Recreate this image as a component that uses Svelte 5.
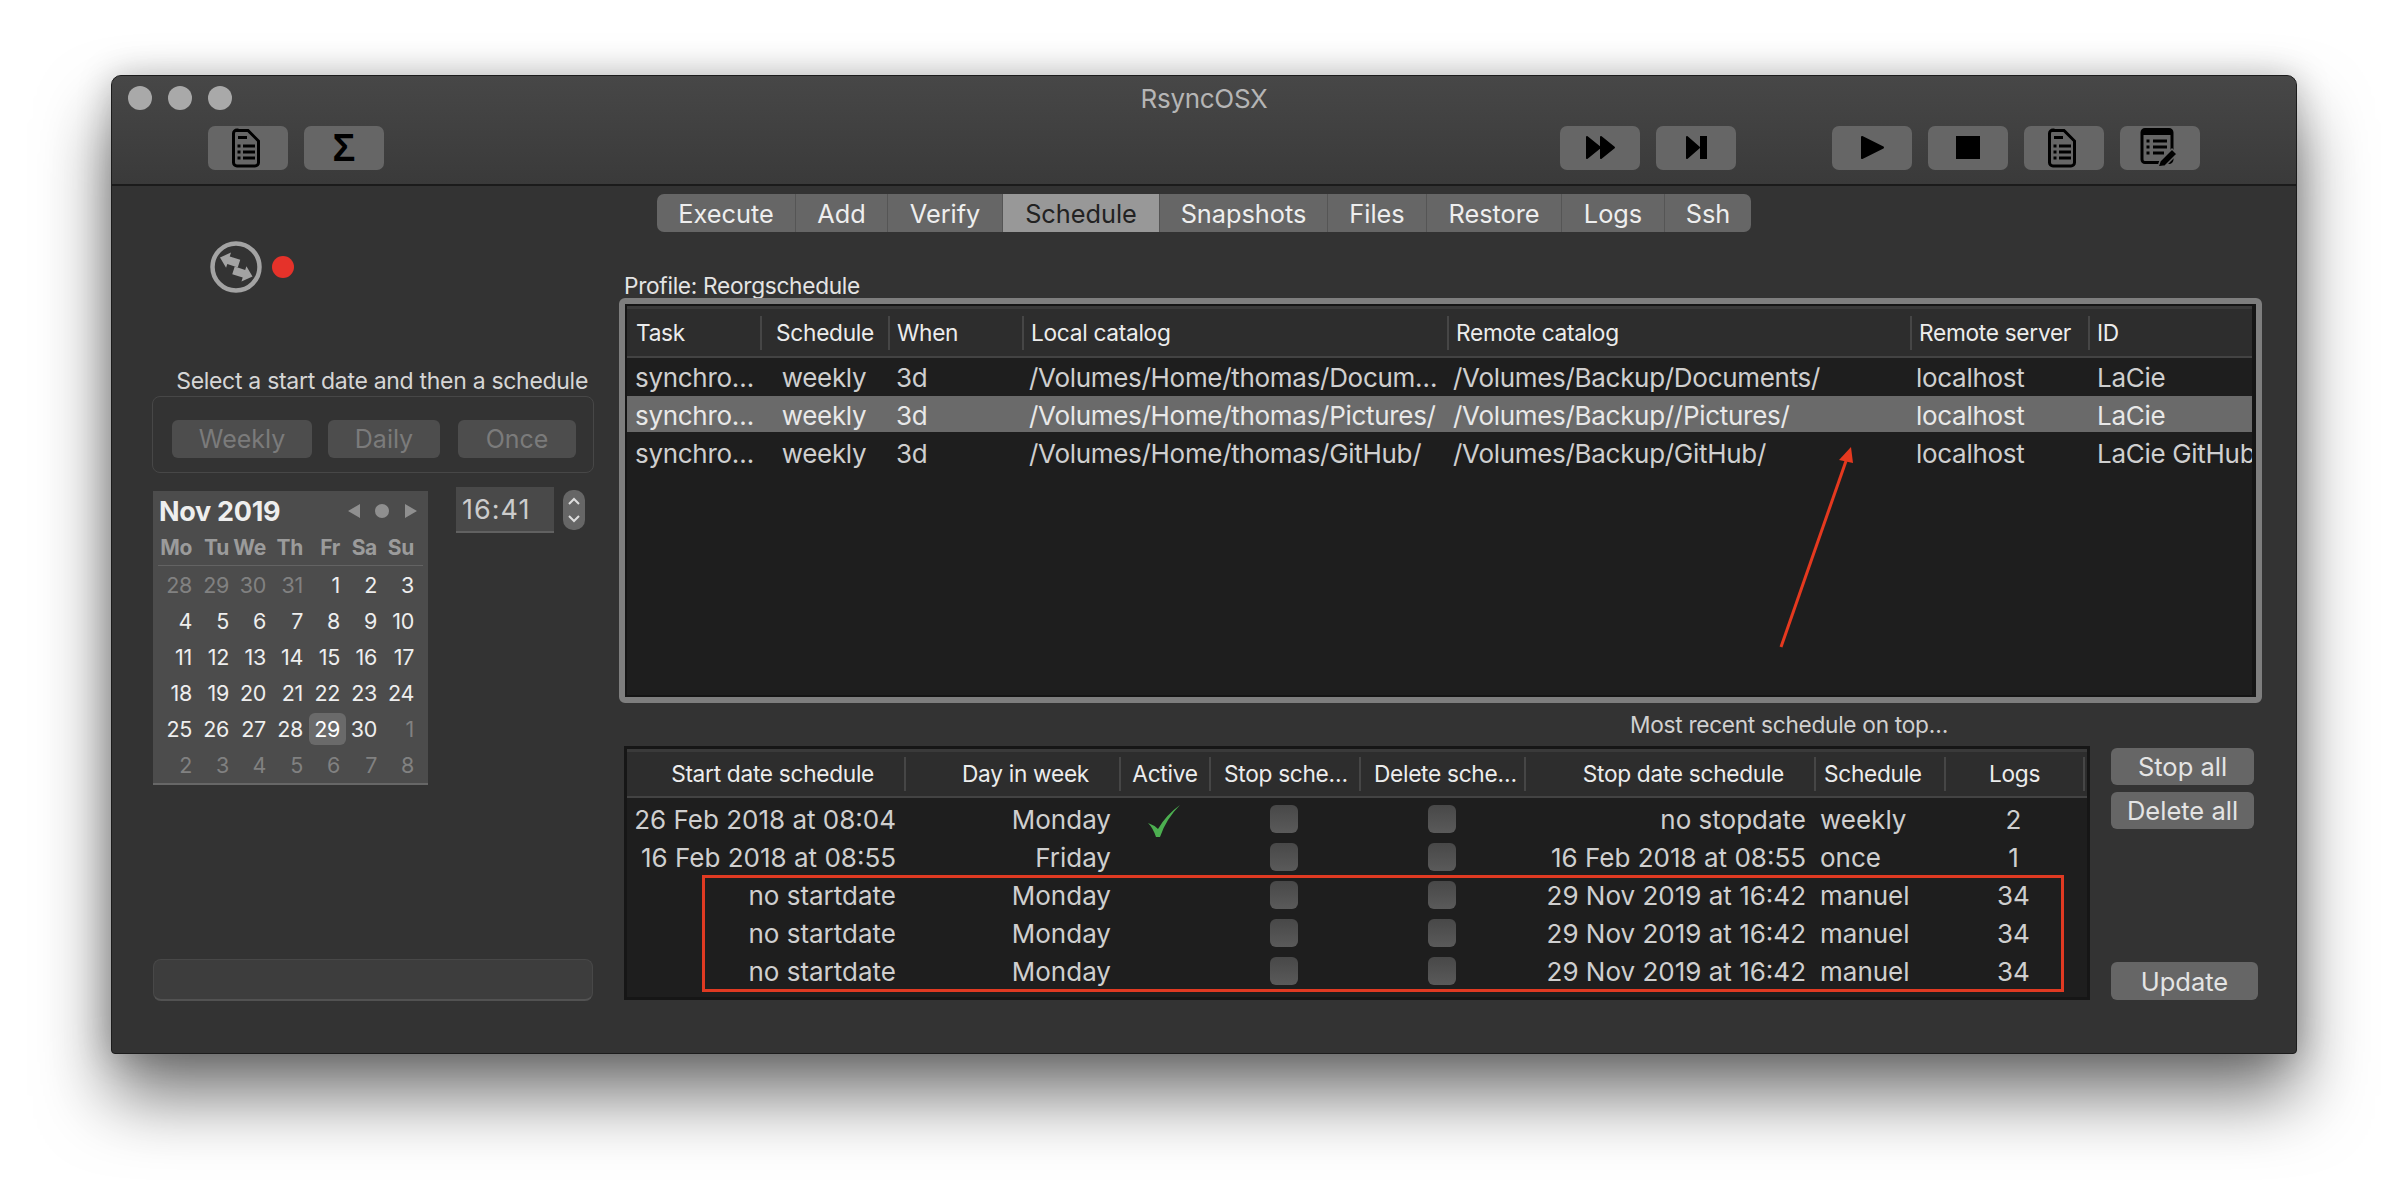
<script lang="ts">
  const tabs = [
    { label: 'Execute', w: 139 },
    { label: 'Add', w: 92 },
    { label: 'Verify', w: 115 },
    { label: 'Schedule', w: 157, active: true },
    { label: 'Snapshots', w: 168 },
    { label: 'Files', w: 99 },
    { label: 'Restore', w: 135 },
    { label: 'Logs', w: 103 },
    { label: 'Ssh', w: 86 },
  ]

  const weekdays = ['Mo', 'Tu', 'We', 'Th', 'Fr', 'Sa', 'Su']
  const days = [
    ...[28, 29, 30, 31].map((n) => ({ n, dim: true })),
    ...Array.from({ length: 30 }, (_, i) => ({ n: i + 1, dim: false })),
    ...[1, 2, 3, 4, 5, 6, 7, 8].map((n) => ({ n, dim: true })),
  ]

  const tasks = [
    { local: '/Volumes/Home/thomas/Docum…', remote: '/Volumes/Backup/Documents/', id: 'LaCie' },
    { local: '/Volumes/Home/thomas/Pictures/', remote: '/Volumes/Backup//Pictures/', id: 'LaCie', selected: true },
    { local: '/Volumes/Home/thomas/GitHub/', remote: '/Volumes/Backup/GitHub/', id: 'LaCie GitHub' },
  ]

  const schedules = [
    { start: '26 Feb 2018 at 08:04', day: 'Monday', active: true, stop: 'no stopdate', kind: 'weekly', logs: 2 },
    { start: '16 Feb 2018 at 08:55', day: 'Friday', active: false, stop: '16 Feb 2018 at 08:55', kind: 'once', logs: 1 },
    { start: 'no startdate', day: 'Monday', active: false, stop: '29 Nov 2019 at 16:42', kind: 'manuel', logs: 34 },
    { start: 'no startdate', day: 'Monday', active: false, stop: '29 Nov 2019 at 16:42', kind: 'manuel', logs: 34 },
    { start: 'no startdate', day: 'Monday', active: false, stop: '29 Nov 2019 at 16:42', kind: 'manuel', logs: 34 },
  ]
</script>

{#snippet docIcon()}
  <svg viewBox="0 0 80 44" class="icon">
    <path d="M29 4.500h11l10.500 10.500v21.500a3.500 3.500 0 0 1-3.500 3.500h-18a3.500 3.500 0 0 1-3.500-3.500v-29a3.500 3.500 0 0 1 3.500-3.500z" fill="none" stroke="#000" stroke-width="3" />
    <path d="M30 11.500h9M35 20h12M35 26h12M35 32h12" stroke="#000" stroke-width="3" fill="none" />
    <path d="M29.500 18.500h3v3h-3zM29.500 24.500h3v3h-3zM29.500 30.500h3v3h-3z" fill="#000" />
  </svg>
{/snippet}

<div class="window">
  <header class="titlebar">
    <div class="title-row">
      <div class="lights"><span></span><span></span><span></span></div>
      <div class="title">RsyncOSX</div>
      <div></div>
    </div>
    <div class="toolbar">
      <button class="tool">{@render docIcon()}</button>
      <button class="tool sigma">Σ</button>
      <div class="tool-group push">
        <button class="tool">
          <svg viewBox="0 0 80 44" class="icon"><path d="M27 11l13 10.500-13 10.500zM41 11l13 10.500-13 10.500z" fill="#000" stroke="#000" stroke-width="2" stroke-linejoin="round" /></svg>
        </button>
        <button class="tool">
          <svg viewBox="0 0 80 44" class="icon"><path d="M31 11l12 10.500-12 10.500z" fill="#000" stroke="#000" stroke-width="2" stroke-linejoin="round" /><rect x="44" y="10" width="7" height="23" fill="#000" /></svg>
        </button>
      </div>
      <div class="tool-group">
        <button class="tool">
          <svg viewBox="0 0 80 44" class="icon"><path d="M30 11l21 10.500-21 10.500z" fill="#000" stroke="#000" stroke-width="2" stroke-linejoin="round" /></svg>
        </button>
        <button class="tool">
          <svg viewBox="0 0 80 44" class="icon"><rect x="28" y="10" width="24" height="23" fill="#000" /></svg>
        </button>
        <button class="tool">{@render docIcon()}</button>
        <button class="tool">
          <svg viewBox="0 0 80 44" class="icon">
            <path d="M25 3.500h24a3 3 0 0 1 3 3v27a3 3 0 0 1-3 3h-24a3 3 0 0 1-3-3v-27a3 3 0 0 1 3-3z" fill="none" stroke="#000" stroke-width="3" />
            <rect x="22" y="3" width="30" height="6" fill="#000" />
            <path d="M33 15h14M33 21h14M33 27h11" stroke="#000" stroke-width="3" />
            <path d="M26.500 13.500h3v3h-3zM26.500 19.500h3v3h-3zM26.500 25.500h3v3h-3z" fill="#000" />
            <path d="M38 41l2-6 12-12 5 5-12 12z" fill="#000" stroke="#666" stroke-width="1.500" />
          </svg>
        </button>
      </div>
    </div>
  </header>

  <nav class="tabs">
    {#each tabs as tab}
      <button class="tab" class:active={tab.active} style:width="{tab.w}px">{tab.label}</button>
    {/each}
  </nav>

  <main class="columns">
    <aside class="left">
      <div class="status">
        <svg viewBox="0 0 52 52" class="sync">
          <circle cx="26" cy="26" r="23.500" fill="none" stroke="#a3a3a3" stroke-width="4.500" />
          <path transform="translate(19.500 19.500) rotate(18)" d="M-10 0l9-8v4h11v8h-11v4z" fill="#a3a3a3" />
          <path transform="translate(33 32.500) rotate(18)" d="M10 0l-9-8v4h-11v8h11v4z" fill="#a3a3a3" />
        </svg>
        <span class="dot"></span>
      </div>

      <div class="hint">Select a start date and then a schedule</div>
      <div class="schedule-box">
        <button class="disabled weekly">Weekly</button>
        <button class="disabled daily">Daily</button>
        <button class="disabled once">Once</button>
      </div>

      <div class="date-row">
        <div class="calendar">
          <div class="cal-head">
            <strong>Nov 2019</strong>
            <svg viewBox="0 0 78 20" class="cal-nav">
              <path d="M20 3v14L8 10zM65 3v14l12-7z" fill="#8f8f8f" />
              <circle cx="42" cy="10" r="7" fill="#8f8f8f" />
            </svg>
          </div>
          <div class="cal-grid weekdays">
            {#each weekdays as d}<span>{d}</span>{/each}
          </div>
          <div class="cal-rule"></div>
          <div class="cal-grid">
            {#each days as d}
              <span class:dim={d.dim}>
                {#if d.n === 29 && !d.dim}<b class="today">{d.n}</b>{:else}{d.n}{/if}
              </span>
            {/each}
          </div>
        </div>
        <div class="time">16:41</div>
        <div class="stepper">
          <svg viewBox="0 0 22 40">
            <path d="M6 14l5-5 5 5M6 26l5 5 5-5" fill="none" stroke="#ddd" stroke-width="2" />
          </svg>
        </div>
      </div>

      <div class="status-field"></div>
    </aside>

    <section class="right">
      <div class="profile">Profile: Reorgschedule</div>

      <div class="ring">
        <div class="table tasks">
          <div class="head task-cols">
            <span class="h-task">Task</span>
            <span class="h-center">Schedule</span>
            <span>When</span>
            <span>Local catalog</span>
            <span>Remote catalog</span>
            <span class="h-server">Remote server</span>
            <span>ID</span>
          </div>
          {#each tasks as t}
            <div class="row task-cols" class:selected={t.selected}>
              <span>synchro…</span>
              <span class="center">weekly</span>
              <span>3d</span>
              <span class="local">{t.local}</span>
              <span class="tight">{t.remote}</span>
              <span class="tight">localhost</span>
              <span class="wide">{t.id}</span>
            </div>
          {/each}
        </div>
        <svg class="arrow" viewBox="0 0 1631 393">
          <path d="M1156 343L1221 157" stroke="#e5391f" stroke-width="3" />
          <path d="M1226 143l-12 13 14 3z" fill="#e5391f" />
        </svg>
      </div>

      <div class="recent">Most recent schedule on top…</div>

      <div class="lower">
        <div class="table schedules">
          <div class="head sched-cols">
            <span class="h-right">Start date schedule</span>
            <span class="h-right">Day in week</span>
            <span class="h-center">Active</span>
            <span class="h-stop">Stop sche…</span>
            <span class="h-stop">Delete sche…</span>
            <span class="h-right">Stop date schedule</span>
            <span class="h-kind">Schedule</span>
            <span class="h-center">Logs</span>
            <span></span>
          </div>
          <div class="sched-rows">
            {#each schedules as s}
              <div class="row sched-cols">
                <span class="right-align">{s.start}</span>
                <span class="right-align">{s.day}</span>
                <span class="center">
                  {#if s.active}
                    <svg viewBox="0 0 36 34" class="check"><path d="M2 19q5 5 8 14h4Q20 15 34 1 20 11 12 25 8 21 2 19z" fill="#4caf50" /></svg>
                  {/if}
                </span>
                <span class="center"><i class="checkbox"></i></span>
                <span class="center"><i class="checkbox"></i></span>
                <span class="right-align">{s.stop}</span>
                <span class="tight">{s.kind}</span>
                <span class="center">{s.logs}</span>
                <span></span>
              </div>
            {/each}
          </div>
          <div class="highlight"></div>
        </div>

        <div class="actions">
          <button class="action">Stop all</button>
          <button class="action">Delete all</button>
          <button class="action update">Update</button>
        </div>
      </div>
    </section>
  </main>
</div>

<style>
  :global(body) {
    background: #fff;
    font-family: Inter, 'Liberation Sans', sans-serif;
    min-height: 100vh;
  }

  button {
    font: inherit;
    border: 0;
    padding: 0;
  }

  .window {
    box-sizing: border-box;
    width: 2186px;
    height: 979px;
    margin: 75px 0 0 111px;
    display: flex;
    flex-direction: column;
    background: #333;
    border: 1px solid #1c1c1c;
    border-radius: 10px 10px 4px 4px;
    box-shadow:
      0 42px 70px rgba(0, 0, 0, 0.55),
      0 0 34px rgba(0, 0, 0, 0.22);
    letter-spacing: -0.3px;
  }

  .titlebar {
    box-sizing: border-box;
    height: 110px;
    background: linear-gradient(#474747, #3a3a3a);
    border-bottom: 2px solid #1b1b1b;
    border-radius: 9px 9px 0 0;
  }

  .title-row {
    height: 44px;
    padding: 0 16px;
    display: grid;
    grid-template-columns: 1fr auto 1fr;
    align-items: center;
  }

  .lights {
    display: flex;
    gap: 16px;
  }

  .lights span {
    width: 24px;
    height: 24px;
    border-radius: 50%;
    background: #a9a9a9;
  }

  .title {
    color: #b5b5b5;
    font-size: 26px;
  }

  .toolbar {
    margin-top: 6px;
    padding: 0 96px;
    display: flex;
    gap: 16px;
  }

  .tool-group {
    display: flex;
    gap: 16px;
    margin-left: 80px;
  }

  .tool-group.push {
    margin-left: auto;
  }

  .tool {
    width: 80px;
    height: 44px;
    border-radius: 7px;
    background: #666;
  }

  .tool.sigma {
    color: #000;
    font-family: 'Liberation Sans', sans-serif;
    font-size: 38px;
    font-weight: 700;
    line-height: 44px;
  }

  .icon {
    display: block;
    width: 80px;
    height: 44px;
  }

  .tabs {
    margin-top: 8px;
    height: 38px;
    display: flex;
    justify-content: center;
  }

  .tab {
    background: #666;
    color: #eee;
    font-size: 25.300px;
    border-right: 1px solid #555;
  }

  .tab:first-child {
    border-radius: 7px 0 0 7px;
  }

  .tab:last-child {
    border-radius: 0 7px 7px 0;
    border-right: 0;
  }

  .tab.active {
    background: #989898;
    color: #222;
  }

  .columns {
    flex: 1;
    display: flex;
    padding-left: 40px;
  }

  .left {
    width: 442px;
    display: flex;
    flex-direction: column;
    padding-bottom: 52px;
    box-sizing: border-box;
  }

  .status {
    margin-top: 9px;
    padding-left: 58px;
    height: 52px;
    display: flex;
    align-items: center;
    gap: 10px;
  }

  .sync {
    width: 52px;
    height: 52px;
  }

  .dot {
    width: 22px;
    height: 22px;
    border-radius: 50%;
    background: #e5322a;
  }

  .hint {
    margin-top: 74px;
    padding-right: 6px;
    line-height: 29px;
    font-size: 23px;
    color: #d6d6d6;
    text-align: right;
    white-space: nowrap;
  }

  .schedule-box {
    box-sizing: border-box;
    height: 77px;
    padding: 23px 0 0 19px;
    display: flex;
    border: 1px solid #474747;
    border-radius: 8px;
  }

  .disabled {
    height: 38px;
    border-radius: 6px;
    background: #4d4d4d;
    color: #7b7b7b;
    font-size: 25px;
  }

  .weekly {
    width: 140px;
  }

  .daily {
    width: 112px;
    margin-left: 16px;
  }

  .once {
    width: 118px;
    margin-left: 18px;
  }

  .date-row {
    margin-top: 14px;
    display: flex;
    align-items: flex-start;
  }

  .calendar {
    box-sizing: border-box;
    width: 275px;
    height: 294px;
    margin: 4px 0 0 1px;
    background: #4c4c4c;
    border-bottom: 2px solid #676767;
  }

  .cal-head {
    height: 40px;
    padding-left: 6px;
    display: flex;
    align-items: center;
    color: #eee;
    font-size: 27px;
  }

  .cal-head strong {
    flex: 1;
  }

  .cal-nav {
    width: 78px;
    height: 20px;
    margin-right: 10px;
  }

  .cal-grid {
    display: grid;
    grid-template-columns: repeat(7, 37px);
    padding-left: 2px;
    font-size: 21.500px;
    line-height: 36px;
    color: #eee;
    text-align: right;
  }

  .weekdays {
    font-size: 21px;
    font-weight: 700;
    line-height: 34px;
    color: #9b9b9b;
  }

  .cal-rule {
    height: 1px;
    margin: 0 5px 1px;
    background: #636363;
  }

  .dim {
    color: #818181;
  }

  .today {
    display: inline-block;
    margin-right: -6px;
    padding: 0 6px 0 5px;
    border-radius: 6px;
    background: #6a6a6a;
    color: #fff;
    font-weight: 400;
    line-height: 32px;
  }

  .time {
    box-sizing: border-box;
    width: 98px;
    height: 46px;
    margin-left: 28px;
    padding-left: 6px;
    background: #494949;
    border-bottom: 2px solid #616161;
    color: #ccc;
    font-size: 27px;
    letter-spacing: 1px;
    line-height: 46px;
  }

  .stepper {
    width: 22px;
    height: 40px;
    margin: 3px 0 0 9px;
    border-radius: 10px;
    background: #666;
  }

  .stepper svg {
    display: block;
    width: 22px;
    height: 40px;
  }

  .status-field {
    box-sizing: border-box;
    height: 42px;
    margin: auto 0 0 1px;
    width: 440px;
    background: #3d3d3d;
    border: 1px solid #484848;
    border-bottom: 2px solid #525252;
    border-radius: 8px;
  }

  .right {
    width: 1643px;
    margin-left: 25px;
  }

  .profile {
    margin: 42px 0 0 5px;
    line-height: 24px;
    font-size: 22.700px;
    color: #e4e4e4;
  }

  .ring {
    position: relative;
    box-sizing: border-box;
    height: 405px;
    border: 6px solid #7e7e7e;
    border-radius: 6px;
  }

  .table {
    box-sizing: border-box;
    background: #1e1e1e;
    overflow: hidden;
    color: #cfcfcf;
    font-size: 26px;
  }

  .tasks {
    height: 393px;
    border: 2px solid #151515;
    border-right-width: 4px;
  }

  .head {
    box-sizing: border-box;
    align-items: center;
    background: #2d2d2d;
    border-top: 3px solid #3a3a3a;
    border-bottom: 2px solid #434343;
    color: #ececec;
    font-size: 22.700px;
  }

  .head > span {
    box-sizing: border-box;
    height: 34px;
    line-height: 33px;
    padding-left: 7px;
    border-left: 2px solid #464646;
    white-space: nowrap;
    overflow: hidden;
  }

  .head > span:first-child {
    border-left: 0;
  }

  .tasks .head {
    height: 52px;
  }

  .task-cols {
    display: grid;
    grid-template-columns: 133px 128px 134px 425px 463px 178px 1fr;
  }

  .row {
    height: 38px;
    line-height: 38px;
    white-space: nowrap;
  }

  .tasks .row {
    line-height: 40px;
  }

  .row > span {
    box-sizing: border-box;
    padding-left: 8px;
    overflow: hidden;
  }

  .row > .tight {
    padding-left: 6px;
  }

  .row > .local {
    padding-left: 7px;
  }

  .row > .wide {
    padding-left: 9px;
  }

  .row > .center,
  .head > .h-center {
    padding-left: 0;
    text-align: center;
  }

  .row > .right-align {
    padding: 0 8px 0 0;
    text-align: right;
  }

  .head > .h-task {
    padding-left: 9px;
  }

  .head > .h-right {
    padding: 0 30px 0 0;
    text-align: right;
  }

  .head > .h-stop {
    padding-left: 13px;
  }

  .head > .h-kind {
    padding-left: 8px;
  }

  .row.selected {
    height: 36px;
    margin-bottom: 2px;
    background: #6a6a6a;
    color: #e8e8e8;
  }

  .arrow {
    position: absolute;
    left: 0;
    top: 0;
    width: 1631px;
    height: 393px;
    pointer-events: none;
  }

  .recent {
    margin: 9px 0 0 1011px;
    line-height: 26px;
    font-size: 22.700px;
    color: #d0d0d0;
    white-space: nowrap;
  }

  .lower {
    margin: 8px 0 0 5px;
    display: flex;
    height: 254px;
  }

  .schedules {
    position: relative;
    width: 1466px;
    border: 3px solid #161616;
  }

  .schedules .head {
    height: 49px;
  }

  .sched-cols {
    display: grid;
    grid-template-columns: 277px 215px 90px 150px 165px 290px 130px 139px 1fr;
  }

  .sched-rows {
    padding-top: 3px;
    letter-spacing: 0;
  }

  .check {
    display: block;
    width: 36px;
    height: 34px;
    margin: 3px auto 0;
  }

  .checkbox {
    display: block;
    width: 28px;
    height: 28px;
    margin: 4px auto 0;
    border-radius: 6px;
    background: linear-gradient(#484848, #5a5a5a);
  }

  .highlight {
    position: absolute;
    left: 75px;
    top: 126px;
    width: 1362px;
    height: 117px;
    box-sizing: border-box;
    border: 3px solid #e03a22;
  }

  .actions {
    margin-left: 21px;
    display: flex;
    flex-direction: column;
    align-items: flex-start;
  }

  .action {
    width: 143px;
    height: 37px;
    margin-top: 7px;
    border-radius: 6px;
    background: #666;
    color: #e4e4e4;
    font-size: 25.500px;
  }

  .action:first-child {
    margin-top: 2px;
  }

  .action.update {
    width: 147px;
    height: 38px;
    margin-top: auto;
  }
</style>
